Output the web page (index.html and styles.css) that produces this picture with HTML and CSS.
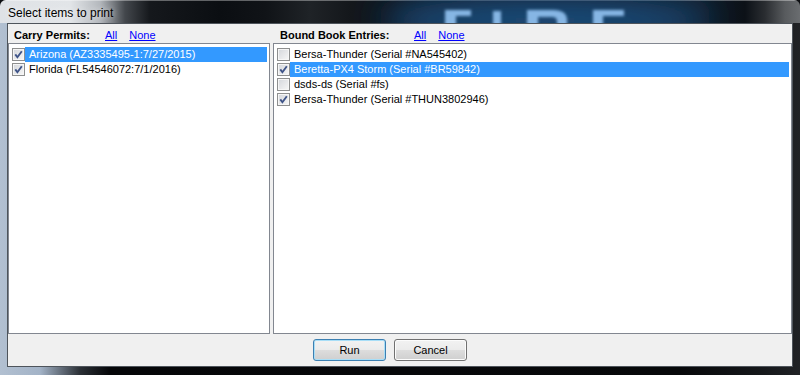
FILE: index.html
```html
<!DOCTYPE html>
<html>
<head>
    <meta charset="utf-8">
    <title>Select items to print</title>
    <link rel="stylesheet" href="styles.css">
</head>
<body>
<div class="window">
    <div class="titlebar">
        <svg class="glass" viewBox="0 0 800 23" preserveAspectRatio="none" aria-hidden="true">
            <defs>
                <filter id="glow" x="-50%" y="-200%" width="200%" height="500%">
                    <feGaussianBlur stdDeviation="16"></feGaussianBlur>
                </filter>
                <filter id="soft" x="-20%" y="-50%" width="140%" height="200%">
                    <feGaussianBlur stdDeviation="1.6"></feGaussianBlur>
                </filter>
            </defs>
            <ellipse cx="545" cy="20" rx="165" ry="22" fill="#1d4d7d" filter="url(#glow)"></ellipse>
            <g fill="#86b6e4" filter="url(#soft)">
                <rect x="445" y="10" width="11" height="16"></rect>
                <rect x="445" y="10" width="26" height="6"></rect>
                <rect x="493" y="11" width="8" height="15"></rect>
                <path d="M527 26 V10 H553 Q567 10 567 20 V26 H557 V21 Q557 17 552 17 H538 V26 Z"></path>
                <rect x="593" y="10" width="10" height="16"></rect>
                <rect x="593" y="10" width="31" height="6"></rect>
            </g>
        </svg>
        <span class="title">Select items to print</span>
    </div>

    <div class="frame">
        <div class="client">
            <div class="panels">
                <div class="panel panel-permits">
                    <div class="panel-header">
                        <span class="panel-label">Carry Permits:</span>
                        <a class="link" href="#">All</a>
                        <a class="link" href="#">None</a>
                    </div>
                    <div class="list">
                        <div class="item selected">
                            <span class="check"><svg viewBox="0 0 11 11"><path d="M2.3 5.4 L4.4 8.2 L8.8 2.2"></path></svg></span>
                            <span class="item-text">Arizona (AZ3335495-1:7/27/2015)</span>
                        </div>
                        <div class="item">
                            <span class="check"><svg viewBox="0 0 11 11"><path d="M2.3 5.4 L4.4 8.2 L8.8 2.2"></path></svg></span>
                            <span class="item-text">Florida (FL54546072:7/1/2016)</span>
                        </div>
                    </div>
                </div>

                <div class="panel panel-entries">
                    <div class="panel-header">
                        <span class="panel-label">Bound Book Entries:</span>
                        <a class="link" href="#">All</a>
                        <a class="link" href="#">None</a>
                    </div>
                    <div class="list">
                        <div class="item">
                            <span class="check"></span>
                            <span class="item-text">Bersa-Thunder (Serial #NA545402)</span>
                        </div>
                        <div class="item selected">
                            <span class="check"><svg viewBox="0 0 11 11"><path d="M2.3 5.4 L4.4 8.2 L8.8 2.2"></path></svg></span>
                            <span class="item-text">Beretta-PX4 Storm (Serial #BR59842)</span>
                        </div>
                        <div class="item">
                            <span class="check"></span>
                            <span class="item-text">dsds-ds (Serial #fs)</span>
                        </div>
                        <div class="item">
                            <span class="check"><svg viewBox="0 0 11 11"><path d="M2.3 5.4 L4.4 8.2 L8.8 2.2"></path></svg></span>
                            <span class="item-text">Bersa-Thunder (Serial #THUN3802946)</span>
                        </div>
                    </div>
                </div>
            </div>

            <div class="buttons">
                <button class="btn btn-default">Run</button>
                <button class="btn">Cancel</button>
            </div>
        </div>
    </div>
</div>
</body>
</html>
```

FILE: styles.css
```css
body {
    margin: 0;
    background-color: #0b0d10;
    font-family: "Liberation Sans", Arial, sans-serif;
}

.window {
    width: 800px;
    height: 375px;
    overflow: hidden;
    border-radius: 6px 6px 0 0;
}

/* Aero glass title bar */
.titlebar {
    position: relative;
    height: 23px;
    display: flex;
    align-items: center;
    background: linear-gradient(to right, #dfe2e6 0px, #e2e5e8 70px, #b4b8bd 100px, #43474c 125px, #15181c 150px, #0b0e12 220px, #101317 265px, #1f2327 310px, #14171b 350px, #0d131b 390px, #0e1a27 430px, #0f1c2a 700px, #0c1117 745px, #2a2d31 765px, #585b5e 785px, #6a6d70 800px);
    box-shadow: inset 0 1px 0 rgba(255, 255, 255, 0.35);
}

.glass {
    position: absolute;
    left: 0;
    top: 0;
    width: 800px;
    height: 23px;
}

.title {
    position: relative;
    padding-left: 8px;
    padding-top: 2px;
    font-size: 12px;
    color: #000;
    text-shadow: 0 0 6px rgba(255, 255, 255, 0.8);
}

.frame {
    padding: 0 7px 8px 7px;
    background: linear-gradient(to right, #b2c0d1 0px, #a3b3c7 40px, #2b3036 80px, #050608 110px, #07080a 680px, #15171a 760px, #202225 800px);
}

.client {
    height: 342px;
    border: 1px solid #4e545b;
    background-color: #f0f0f0;
    font-size: 11px;
    color: #000;
}

.panels {
    display: flex;
    gap: 3px;
}

.panel-permits {
    width: 262px;
}

.panel-entries {
    flex: 1;
}

.panel-header {
    height: 19px;
    box-sizing: border-box;
    padding-top: 5px;
    line-height: 13px;
    display: flex;
}

.panel-permits .panel-header {
    padding-left: 6px;
}

.panel-entries .panel-header {
    padding-left: 7px;
}

.panel-label {
    font-weight: bold;
}

.panel-permits .panel-label {
    width: 91px;
}

.panel-entries .panel-label {
    width: 134px;
}

.link {
    color: #0000ff;
    text-decoration: underline;
    margin-right: 12px;
}

.list {
    height: 291px;
    box-sizing: border-box;
    border: 1px solid #828790;
    background-color: #fff;
    padding-top: 3px;
}

.item {
    height: 15px;
    display: flex;
    align-items: center;
}

.check {
    width: 13px;
    height: 13px;
    box-sizing: border-box;
    margin-left: 3px;
    border: 1px solid #8e8f8f;
    background: linear-gradient(135deg, #d3d6db 0%, #e6e7e9 50%, #f7f7f7 100%);
    box-shadow: inset 0 0 0 1px #f6f6f6;
    flex-shrink: 0;
}

.check svg {
    display: block;
    width: 11px;
    height: 11px;
}

.check path {
    fill: none;
    stroke: #3f5488;
    stroke-width: 1.9;
    stroke-linejoin: miter;
}

.item-text {
    flex: 1;
    height: 15px;
    line-height: 15px;
    padding-left: 4px;
    margin-right: 2px;
    white-space: nowrap;
}

.item.selected .item-text {
    background-color: #3399ff;
    color: #fff;
}

.buttons {
    display: flex;
    gap: 8px;
    padding-left: 305px;
    padding-top: 5px;
}

.btn {
    width: 73px;
    height: 22px;
    padding: 0;
    font-family: "Liberation Sans", Arial, sans-serif;
    font-size: 11px;
    color: #000;
    border: 1px solid #707070;
    border-radius: 3px;
    background: linear-gradient(#f2f2f2 0%, #ebebeb 50%, #dddddd 51%, #cfcfcf 100%);
    box-shadow: inset 0 0 0 1px #fcfcfc;
}

.btn-default {
    border-color: #3c7fb1;
    box-shadow: inset 0 0 0 1px #a8def7;
}
```
